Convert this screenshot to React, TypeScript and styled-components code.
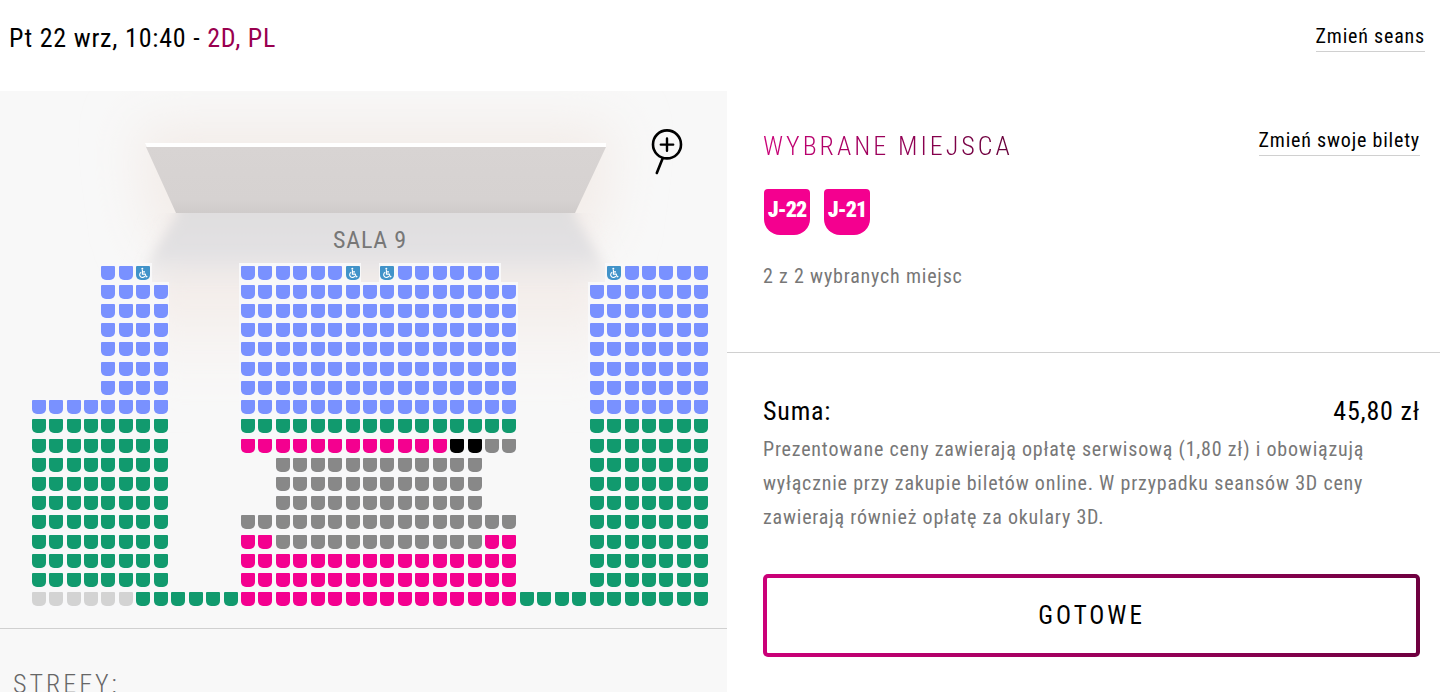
import React, { useState } from 'react';
import styled, { createGlobalStyle } from 'styled-components';

const GlobalStyle = createGlobalStyle`
  *, *::before, *::after { box-sizing: border-box; }
  body {
    margin: 0;
    background: #fff;
    color: #000;
    font-family: 'Roboto Condensed', 'Liberation Sans', sans-serif;
    font-size: 20px;
    font-weight: 400;
  }
  #root { letter-spacing: 0.04em; }
  h1, h2, p { margin: 0; font-weight: inherit; }
  button { font: inherit; letter-spacing: inherit; cursor: pointer; }
`;

type SeatKind = 'blue' | 'green' | 'pink' | 'grey' | 'light' | 'mine' | 'access';

const seatColours: Record<SeatKind, string> = {
  blue: '#7991ff',
  green: '#119a6e',
  pink: '#f4008f',
  grey: '#888',
  light: '#d3d3d3',
  mine: '#000',
  access: '#4193c9',
};

const seatCodes: Record<string, SeatKind> = {
  b: 'blue',
  g: 'green',
  p: 'pink',
  x: 'grey',
  l: 'light',
  m: 'mine',
  a: 'access',
};

/* One character per place in the hall; a dot is an empty place. */
const hallPlan = [
  '....bba.....bbbbbba.abbbbbb......abbbbb',
  '....bbbb....bbbbbbbbbbbbbbbb....bbbbbbb',
  '....bbbb....bbbbbbbbbbbbbbbb....bbbbbbb',
  '....bbbb....bbbbbbbbbbbbbbbb....bbbbbbb',
  '....bbbb....bbbbbbbbbbbbbbbb....bbbbbbb',
  '....bbbb....bbbbbbbbbbbbbbbb....bbbbbbb',
  '....bbbb....bbbbbbbbbbbbbbbb....bbbbbbb',
  'bbbbbbbb....bbbbbbbbbbbbbbbb....bbbbbbb',
  'gggggggg....gggggggggggggggg....ggggggg',
  'gggggggg....ppppppppppppmmxx....ggggggg',
  'gggggggg......xxxxxxxxxxxx......ggggggg',
  'gggggggg......xxxxxxxxxxxx......ggggggg',
  'gggggggg......xxxxxxxxxxxx......ggggggg',
  'gggggggg....xxxxxxxxxxxxxxxx....ggggggg',
  'gggggggg....ppxxxxxxxxxxxxpp....ggggggg',
  'gggggggg....pppppppppppppppp....ggggggg',
  'gggggggg....pppppppppppppppp....ggggggg',
  'llllllggggggppppppppppppppppggggggggggg',
];

const Page = styled.div`
  display: flex;
  flex-direction: column;
  min-height: 100vh;
`;

const TopBar = styled.header`
  display: flex;
  justify-content: space-between;
  align-items: flex-start;
  padding: 21px 15px 36px 9px;
`;

const ShowTitle = styled.h1`
  font-size: 26px;
  line-height: 34px;
`;

const Format = styled.span`
  color: #99004f;
`;

const TextLink = styled.a`
  color: #000;
  line-height: 30px;
  border-bottom: 1px solid #d0d0d0;
  text-decoration: none;
  white-space: nowrap;
`;

const Columns = styled.main`
  flex: 1;
  display: grid;
  grid-template-columns: 727fr 713fr;
`;

const HallPanel = styled.section`
  position: relative;
  background: #f8f8f8;
`;

const Stage = styled.svg`
  position: absolute;
  top: 0;
  left: 0;
  width: 100%;
  height: auto;
`;

const Hall = styled.div`
  position: relative;
  padding: 134px 17px 19px 30px;
  border-bottom: 1px solid #d0d0d0;
`;

const HallName = styled.h2`
  margin-bottom: 8px;
  color: #777;
  font-size: 24px;
  line-height: 30px;
  text-align: center;
`;

const ZoomButton = styled.button`
  position: absolute;
  top: 36px;
  right: 43px;
  display: flex;
  padding: 0;
  border: 0;
  background: none;
`;

const SeatGrid = styled.div`
  display: grid;
  grid-template-columns: repeat(39, 1fr);
  grid-template-rows: repeat(18, 1fr);
  height: 346px;
`;

const SeatCell = styled.div`
  display: flex;
  align-items: center;
  justify-content: center;
  background: #f8f8f9;
`;

const Seat = styled.button<{ $kind: SeatKind }>`
  display: flex;
  align-items: center;
  justify-content: center;
  width: 14px;
  height: 14px;
  padding: 0;
  border: 0;
  border-radius: 1px 1px 5px 5px;
  background: ${p => seatColours[p.$kind]};
`;

const Zones = styled.div`
  padding: 40px 13px 0;
  color: #666;
`;

const Heading = styled.h2`
  font-size: 26px;
  font-weight: 300;
  line-height: 30px;
  letter-spacing: 3px;
`;

const GradientHeading = styled(Heading)`
  line-height: 42px;
  background: linear-gradient(90deg, #cb0078, #650038);
  background-clip: text;
  color: transparent;
`;

const Summary = styled.section`
  display: flex;
  flex-direction: column;
`;

const Chosen = styled.div`
  padding: 34px 20px 61px 36px;
  border-bottom: 1px solid #d0d0d0;
`;

const ChosenHead = styled.div`
  display: flex;
  justify-content: space-between;
  align-items: flex-start;
`;

const Badges = styled.div`
  display: flex;
  gap: 14px;
  margin: 22px 0 26px 1px;
`;

const Badge = styled.span`
  width: 46px;
  height: 46px;
  border-radius: 4px 4px 16px 16px;
  background: #f4008f;
  color: #fff;
  font-size: 22px;
  font-weight: 900;
  line-height: 41px;
  letter-spacing: -1px;
  text-align: center;
`;

const Count = styled.p`
  color: #777;
  line-height: 30px;
`;

const Payment = styled.div`
  padding: 38px 20px 36px 36px;
`;

const Total = styled.div`
  display: flex;
  justify-content: space-between;
  font-size: 26px;
  line-height: 41px;
`;

const Note = styled.p`
  margin-bottom: 40px;
  color: #777;
  line-height: 34px;
`;

const DoneButton = styled.button`
  width: 100%;
  height: 83px;
  border: 4px solid transparent;
  border-radius: 5px;
  background:
    linear-gradient(#fff, #fff) padding-box,
    linear-gradient(90deg, #cb0078, #6f0040) border-box;
  color: #000;
  font-size: 25px;
  letter-spacing: 3px;
`;

function StageArt() {
  return (
    <Stage viewBox="0 0 727 400" aria-hidden="true">
      <defs>
        <filter id="glow" x="-30%" y="-80%" width="160%" height="260%">
          <feGaussianBlur stdDeviation="26" />
        </filter>
        <filter id="soft" x="-20%" y="-20%" width="140%" height="140%">
          <feGaussianBlur stdDeviation="6" />
        </filter>
        <filter id="haze" x="-30%" y="-30%" width="160%" height="160%">
          <feGaussianBlur stdDeviation="14" />
        </filter>
        <linearGradient id="screen" x1="0" y1="0" x2="0" y2="1">
          <stop offset="0" stopColor="#d8d4d3" />
          <stop offset="0.8" stopColor="#d6d2d1" />
          <stop offset="1" stopColor="#cfcbca" />
        </linearGradient>
        <linearGradient id="floor" x1="0" y1="0" x2="0" y2="1">
          <stop offset="0" stopColor="#dfdddd" />
          <stop offset="0.6" stopColor="#e2e1e3" />
          <stop offset="1" stopColor="#ebe8e9" stopOpacity="0" />
        </linearGradient>
        <linearGradient id="warmth" x1="0" y1="0" x2="0" y2="1">
          <stop offset="0" stopColor="#f0e9e7" />
          <stop offset="0.45" stopColor="#f4eeeb" />
          <stop offset="1" stopColor="#f8f6f5" stopOpacity="0" />
        </linearGradient>
        <clipPath id="belowScreen">
          <rect x="0" y="122" width="727" height="278" />
        </clipPath>
      </defs>
      <path d="M136 34H616L600 150H152Z" fill="#f3ece8" filter="url(#glow)" />
      <g clipPath="url(#belowScreen)">
        <path d="M176 122H575L600 190V320H152V190Z" fill="url(#warmth)" filter="url(#haze)" />
        <path d="M178 102H573V122L618 200H132L178 122Z" fill="url(#floor)" filter="url(#soft)" />
      </g>
      <path d="M146 56H606L575 122H176Z" fill="url(#screen)" />
      <path d="M145 52H606V56H147Z" fill="#fff" />
    </Stage>
  );
}

function WheelchairIcon() {
  return (
    <svg width="14" height="14" viewBox="0 0 14 14" fill="none" stroke="#fff" strokeWidth="1.1" aria-hidden="true">
      <circle cx="6.3" cy="2.8" r="1" fill="#fff" stroke="none" />
      <path d="M6.4 4V8.1H9.2L10.2 10.8L11.4 10.5M6.5 5.9H9" />
      <path d="M5.2 6.3A2.7 2.7 0 1 0 8.8 9.9" />
    </svg>
  );
}

export default function App() {
  const [zoomed, setZoomed] = useState(false);
  return (
    <Page>
      <GlobalStyle />
      <TopBar>
        <ShowTitle>
          Pt 22 wrz, 10:40 - <Format>2D, PL</Format>
        </ShowTitle>
        <TextLink href="#seans">Zmień seans</TextLink>
      </TopBar>
      <Columns>
        <HallPanel>
          <StageArt />
          <Hall>
            <HallName>SALA 9</HallName>
            <SeatGrid>
              {hallPlan.flatMap((row, r) =>
                [...row].map((code, c) => {
                  const kind = seatCodes[code];
                  if (!kind) return null;
                  return (
                    <SeatCell key={`${r}-${c}`} style={{ gridRow: r + 1, gridColumn: c + 1 }}>
                      <Seat
                        type="button"
                        $kind={kind}
                        aria-label={`Rząd ${r + 1}, miejsce ${c + 1}`}
                        aria-pressed={kind === 'mine'}
                        disabled={kind === 'grey' || kind === 'light'}
                      >
                        {kind === 'access' && <WheelchairIcon />}
                      </Seat>
                    </SeatCell>
                  );
                }),
              )}
            </SeatGrid>
            <ZoomButton type="button" aria-label="Powiększ" aria-pressed={zoomed} onClick={() => setZoomed(!zoomed)}>
              <svg width="34" height="48" viewBox="0 0 34 48" fill="none" stroke="#000" strokeLinecap="round">
                <circle cx="17" cy="17.4" r="14" strokeWidth="2.6" />
                <path d="M10.8 17.6H23.2M17 11.4V23.8" strokeWidth="2.4" />
                <path d="M12.6 31.4L6.8 46" strokeWidth="2.6" />
              </svg>
            </ZoomButton>
          </Hall>
          <Zones>
            <Heading>STREFY:</Heading>
          </Zones>
        </HallPanel>
        <Summary>
          <Chosen>
            <ChosenHead>
              <GradientHeading>WYBRANE MIEJSCA</GradientHeading>
              <TextLink href="#bilety">Zmień swoje bilety</TextLink>
            </ChosenHead>
            <Badges>
              <Badge>J-22</Badge>
              <Badge>J-21</Badge>
            </Badges>
            <Count>2 z 2 wybranych miejsc</Count>
          </Chosen>
          <Payment>
            <Total>
              <span>Suma:</span>
              <span>45,80 zł</span>
            </Total>
            <Note>
              Prezentowane ceny zawierają opłatę serwisową (1,80 zł) i obowiązują wyłącznie przy zakupie biletów
              online. W przypadku seansów 3D ceny zawierają również opłatę za okulary 3D.
            </Note>
            <DoneButton type="button">GOTOWE</DoneButton>
          </Payment>
        </Summary>
      </Columns>
    </Page>
  );
}
